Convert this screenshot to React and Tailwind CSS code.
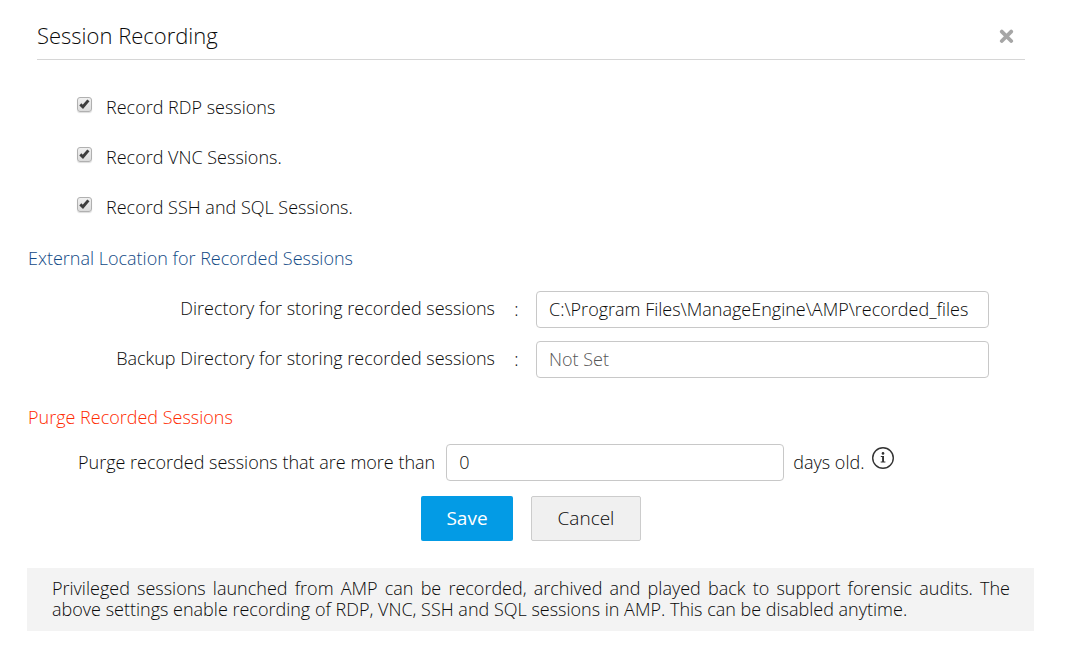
const font = "font-['Open_Sans',sans-serif]";

function Tick({ id, label }) {
  return (
    <div className="flex h-[50px] items-center">
      <span className="relative mb-[6px] flex h-[15px] w-[15px]">
        <input
          id={id}
          type="checkbox"
          defaultChecked
          className="peer h-[15px] w-[15px] appearance-none rounded-[3px] border border-[#b0b0b0] bg-linear-to-b from-[#f0f0f0] to-[#dcdcdc] shadow-[0_1px_1px_#ddd]"
        />
        <svg
          viewBox="0 0 15 15"
          className="pointer-events-none absolute inset-0 hidden h-[15px] w-[15px] peer-checked:block"
          aria-hidden="true"
        >
          <path d="M3.3 7.4 L5.9 9.8 L11.4 3.4" fill="none" stroke="#3d3d3d" strokeWidth="2.9" />
        </svg>
      </span>
      <label htmlFor={id} className="pl-[14px]">{label}</label>
    </div>
  );
}

function DirectoryRow({ id, label, ...input }) {
  return (
    <div className="flex items-center">
      <label htmlFor={id} className="w-[467px] pb-[3px] text-right">{label}</label>
      <span className="w-[41px] pb-[2px] pl-[2px] text-center">:</span>
      <input
        id={id}
        type="text"
        className="h-[37px] min-w-0 flex-1 rounded-[4px] border border-[#c8c8c8] px-3 pb-[2px] placeholder:text-[#555]"
        {...input}
      />
    </div>
  );
}

export default function App() {
  return (
    <main className={`${font} bg-white text-[18px] leading-[24px] font-light text-[#0a0a0a]`}>
      <header className="mr-[43px] ml-[37px] flex h-[60px] items-center justify-between border-b border-[#d6d6d6] pt-3 pr-[11px]">
        <h1 className="pb-[2px] text-[22px] leading-[30px] font-light">Session Recording</h1>
        <button type="button" aria-label="Close" className="flex">
          <svg viewBox="0 0 15 15" className="h-[15px] w-[15px]" aria-hidden="true">
            <path d="M2.8 3.6 L12.2 13 M12.2 3.6 L2.8 13" stroke="#a6a6a6" strokeWidth="3.8" strokeLinecap="round" />
          </svg>
        </button>
      </header>

      <form className="pr-[34px] pl-[27px]">
        <div className="pt-[22px] pl-[50px]">
          <Tick id="rdp" label="Record RDP sessions" />
          <Tick id="vnc" label="Record VNC Sessions." />
          <Tick id="ssh" label="Record SSH and SQL Sessions." />
        </div>

        <div className="pl-px">
          <h2 className="mt-[14px] font-light text-[#124a86]">External Location for Recorded Sessions</h2>
          <div className="mt-[21px] mr-[45px] flex flex-col gap-[13px]">
            <DirectoryRow
              id="dir"
              label="Directory for storing recorded sessions"
              defaultValue="C:\Program Files\ManageEngine\AMP\recorded_files"
            />
            <DirectoryRow
              id="backup"
              label="Backup Directory for storing recorded sessions"
              placeholder="Not Set"
            />
          </div>

          <h2 className="mt-[27px] font-light text-[#ff2a00]">Purge Recorded Sessions</h2>
          <div className="mt-[15px] flex items-center pl-[50px]">
            <label htmlFor="days" className="pb-[2px]">Purge recorded sessions that are more than</label>
            <input
              id="days"
              type="text"
              defaultValue="0"
              className="ml-[11px] h-[37px] w-[338px] rounded-[4px] border border-[#c8c8c8] px-3 pb-[2px]"
            />
            <span className="ml-[9px] pb-[2px]">days old.</span>
            <svg viewBox="0 0 24 24" className="mb-[10px] ml-[7px] h-6 w-6" role="img" aria-label="Information">
              <circle cx="12" cy="12" r="10.3" fill="none" stroke="#333" strokeWidth="1.4" />
              <circle cx="12" cy="7.4" r="1.3" fill="#333" />
              <path d="M9.8 10 H13 V15.6 H14.4 V16.6 H9.7 V15.6 H11.1 V11 H9.8 Z" fill="#333" />
            </svg>
          </div>
        </div>

        <div className="mt-[15px] flex gap-[18px] pl-[394px]">
          <button type="button" className="h-[45px] w-[92px] rounded-[2px] bg-[#039be5] pb-[2px] text-[19px] font-normal text-white">Save</button>
          <button type="button" className="h-[45px] w-[110px] rounded-[2px] border border-[#ccc] bg-[#f0f0f0] pb-[2px] text-[19px]">Cancel</button>
        </div>

        <p className="mt-[27px] bg-[#f3f3f3] pt-[10px] pr-[24px] pb-[11px] pl-[25px] text-justify leading-[21px]">
          Privileged sessions launched from AMP can be recorded, archived and played back to support forensic audits. The
          above settings enable recording of RDP, VNC, SSH and SQL sessions in AMP. This can be disabled anytime.
        </p>
      </form>
    </main>
  );
}
